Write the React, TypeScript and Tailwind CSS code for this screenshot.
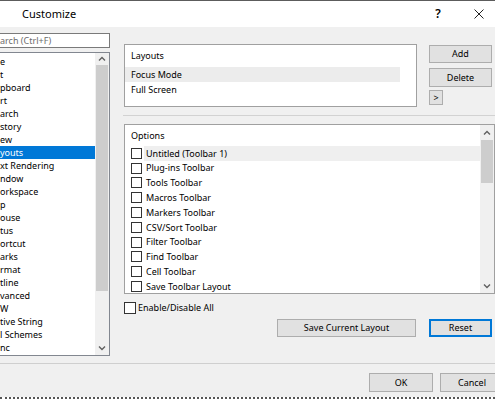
import React from 'react';

const leftItems = [
  'e', 't', 'pboard', 'rt', 'arch', 'story', 'ew', 'youts', 'xt Rendering', 'ndow',
  'orkspace', 'p', 'ouse', 'tus', 'ortcut', 'arks', 'rmat', 'tline', 'vanced', 'W',
  'tive String', 'l Schemes', 'nc',
];

const options = [
  'Untitled (Toolbar 1)',
  'Plug-ins Toolbar',
  'Tools Toolbar',
  'Macros Toolbar',
  'Markers Toolbar',
  'CSV/Sort Toolbar',
  'Filter Toolbar',
  'Find Toolbar',
  'Cell Toolbar',
  'Save Toolbar Layout',
];

const Chevron = ({ down = false }: { down?: boolean }) => (
  <svg width="8" height="6" viewBox="0 0 8 6" fill="none">
    <path
      d={down ? 'M1 1.5 L4 4.5 L7 1.5' : 'M1 4.5 L4 1.5 L7 4.5'}
      stroke="#606060"
      strokeWidth="1.4"
    />
  </svg>
);

const Btn = ({ label, className = '' }: { label: string; className?: string }) => (
  <div
    className={`flex items-center justify-center bg-[#e1e1e1] border border-[#adadad] shrink-0 ${className}`}
  >
    {label}
  </div>
);

const App = () => {
  return (
    <div className="w-[495px] h-[400px] overflow-hidden bg-[#f0f0f0] flex flex-col text-[9px] text-black font-['Noto_Sans','Open_Sans',sans-serif]">
      {/* title bar */}
      <div className="h-[27px] shrink-0 bg-white border-t border-[#5c5c5c] flex items-center">
        <span className="ml-[22px] text-[11px]">Customize</span>
        <div className="flex-1" />
        <span className="w-[46px] text-center text-[12px] font-semibold">?</span>
        <span className="w-[34px] shrink-0 pl-[13px] flex items-center">
          <svg width="10" height="10" viewBox="0 0 10 10">
            <path d="M0.5 0.5 L9.5 9.5 M9.5 0.5 L0.5 9.5" stroke="#222" strokeWidth="1" />
          </svg>
        </span>
      </div>

      {/* body */}
      <div className="flex h-[336px] shrink-0">
        {/* category list */}
        <div className="w-[110px] shrink-0 pt-[6px] flex flex-col">
          <div className="h-[15px] bg-white border-y border-r border-[#7a7a7a] flex items-center text-[#6d6d6d] leading-none">
            arch (Ctrl+F)
          </div>
          <div className="mt-[4px] h-[304px] bg-white border-y border-r border-[#828790] flex">
            <div className="flex-1 pt-[2px]">
              {leftItems.map((item) => (
                <div
                  key={item}
                  className={`h-[13px] flex items-center whitespace-nowrap ${
                    item === 'youts' ? 'bg-[#0078d7] text-white' : ''
                  }`}
                >
                  {item}
                </div>
              ))}
            </div>
            <div className="w-[14px] bg-[#f0f0f0] flex flex-col items-stretch">
              <div className="h-[12px] flex items-center justify-center">
                <Chevron />
              </div>
              <div className="h-[226px] mx-[1px] bg-[#cdcdcd]" />
              <div className="flex-1" />
              <div className="h-[15px] flex items-center justify-center">
                <Chevron down />
              </div>
            </div>
          </div>
        </div>

        {/* right side */}
        <div className="ml-[14px] flex-1 pt-[17px] flex flex-col">
          <div className="flex">
            <div className="w-[293px] h-[63px] bg-white border border-[#a0a0a0] shrink-0">
              <div className="h-[22px] flex items-center pl-[6px]">Layouts</div>
              <div className="h-[15px] w-[275px] bg-[#ececec] flex items-center pl-[6px]">Focus Mode</div>
              <div className="h-[15px] flex items-center pl-[6px]">Full Screen</div>
            </div>
            <div className="ml-[12px] pt-[1px] flex flex-col">
              <Btn label="Add" className="w-[63px] h-[18px]" />
              <Btn label="Delete" className="w-[63px] h-[19px] mt-[5px]" />
              <Btn label=">" className="w-[14px] h-[15px] mt-[3px]" />
            </div>
          </div>

          <div className="mt-[8px] -ml-[1px] h-px bg-[#d2d2d2]" />

          <div className="mt-[8px] h-[170px] w-[371px] shrink-0 bg-white border border-[#a0a0a0] flex">
            <div className="flex-1 overflow-hidden">
              <div className="h-[21px] flex items-center pl-[6px]">Options</div>
              {options.map((opt, i) => (
                <div key={opt} className="h-[14.8px] flex items-center">
                  <div className="ml-[6px] w-[11px] h-[11px] border border-[#333] bg-white shrink-0" />
                  <div
                    className={`ml-[2px] pl-[2px] flex-1 h-full flex items-center whitespace-nowrap ${
                      i === 0 ? 'bg-[#efefef]' : ''
                    }`}
                  >
                    {opt}
                  </div>
                </div>
              ))}
            </div>
            <div className="w-[14px] bg-[#f0f0f0] flex flex-col">
              <div className="h-[15px] flex items-center justify-center">
                <Chevron />
              </div>
              <div className="h-[43px] mx-[1px] bg-[#cdcdcd]" />
              <div className="flex-1" />
              <div className="h-[15px] flex items-center justify-center">
                <Chevron down />
              </div>
            </div>
          </div>

          <div className="mt-[7px] flex items-center">
            <div className="w-[12px] h-[12px] border border-[#333] bg-white" />
            <span className="ml-[2px]">Enable/Disable All</span>
          </div>

          <div className="mt-[4px] flex">
            <Btn label="Save Current Layout" className="ml-[153px] w-[139px] h-[18px]" />
            <Btn
              label="Reset"
              className="ml-[13px] w-[63px] h-[18px] !border-[#0078d7] shadow-[inset_0_0_0_1px_#0078d7]"
            />
          </div>
        </div>
      </div>

      <div className="h-px bg-[#cfcfcf] shrink-0" />

      {/* footer */}
      <div className="h-[33px] shrink-0 pt-[9px] flex">
        <Btn label="OK" className="ml-[369px] w-[64px] h-[19px]" />
        <Btn label="Cancel" className="ml-[7px] w-[64px] h-[19px]" />
      </div>
      <div className="flex-1 bg-white border-t-2 border-dotted border-[#555]" />
    </div>
  );
};

export default App;
